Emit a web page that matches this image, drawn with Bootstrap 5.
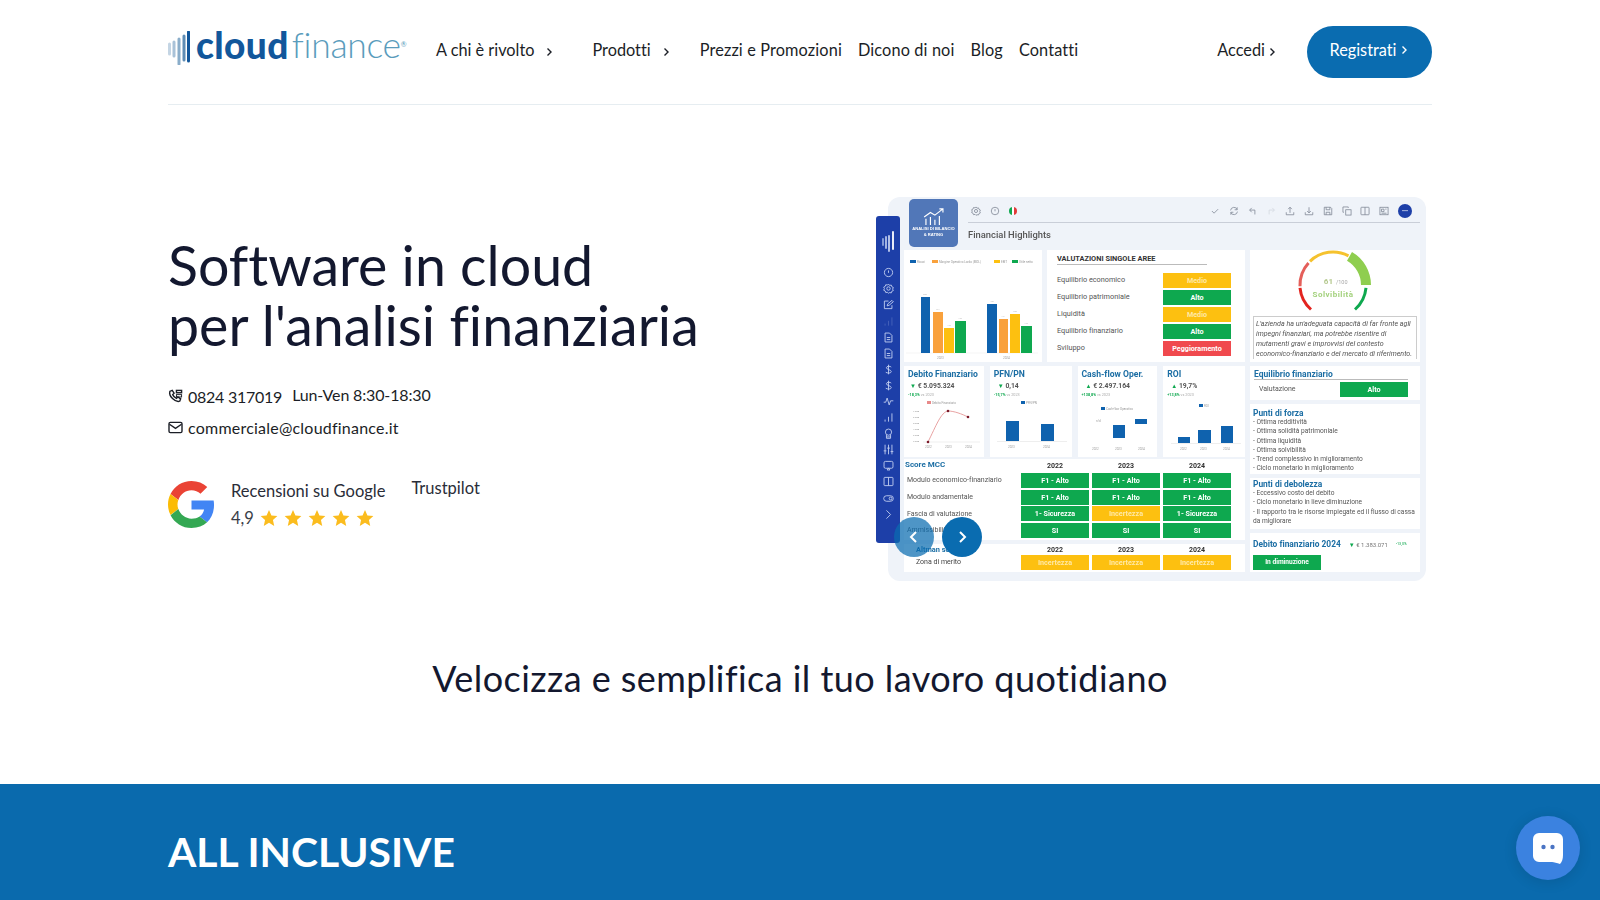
<!DOCTYPE html>
<html lang="it">
<head>
<meta charset="utf-8">
<title>Cloud Finance</title>
<link href="https://cdn.jsdelivr.net/npm/bootstrap@5.3.0/dist/css/bootstrap.min.css" rel="stylesheet">
<style>
body { font-family: Lato, "Liberation Sans", sans-serif; color: #13182f; background: #fff; overflow: hidden; font-variant-ligatures: none; }
a { text-decoration: none; }
.page-wrap { width: 1264px; margin: 0 auto; }

/* header */
.topbar { height: 105px; border-bottom: 1px solid #e6edf1; padding: 0 !important; }
.brand { font-size: 37px; line-height: 1; margin: -15px 0 0 0; padding: 0; width: 268px; color: #12579b; }
.brand svg { margin-right: 6px; margin-top: 6px; }
.brand-a { font-weight: 900; letter-spacing: .4px; color: #12579b; }
.brand-b { font-size: 35.5px; font-weight: 300; color: #5a9cbc; margin-left: 3px; letter-spacing: -.3px; }
.brand-r { font-size: 7px; vertical-align: 20px; color: #5a9cbc; }
.mainnav { margin-top: -4px; }
.navbar-expand .navbar-nav .mainlink { color: #1b1e26; font-size: 16.3px; padding: 0; white-space: nowrap; }
.chev { display: inline-block; margin-left: 4px; vertical-align: -1px; }
.nav-drop .chev { margin-left: 12px; }
.nav-drop { margin-right: 39px; }
.nav-drop-b { margin-right: 30px; }
.navbar-expand .navbar-nav .nav-plain { margin-right: 16px; letter-spacing: .13px; }
.navbar-expand .navbar-nav .nav-last { letter-spacing: .13px; }
.login { color: #1b1e26; font-size: 16.3px; margin-right: 31px; margin-top: -4px; }
.signup { background: #0a6cb0; color: #fff; border-radius: 26px; height: 52px; width: 125px; font-size: 16.3px; padding: 0 2px 4px 0; border: 0; }
.signup:hover { background: #0a6cb0; color: #fff; }

/* hero */
.hero { padding-top: 92px; height: 476px; }
.hero-title { font-size: 55.5px; line-height: 60px; font-weight: 400; color: #13182f; margin: 38px 0 0; }
.contact-line { font-size: 16px; color: #1b1e26; height: 31px; }
.contact-line svg { margin-right: 5px; }
.contact-first { margin-top: 26px; }
.phone-text { letter-spacing: -.25px; }
.hours { margin-left: 10px; margin-top: -3px; letter-spacing: -.15px; }
.mail-text { letter-spacing: .22px; }
.reviews { margin-top: 38px; }
.g-logo { margin-right: 16px; }
.rev-title { font-size: 16.5px; color: #2a2d38; line-height: 20px; }
.rev-score { font-size: 16.5px; color: #3b3e48; line-height: 20px; margin-top: 7px; }
.rev-score svg { margin-left: 6px; }
.trust { font-size: 16.5px; color: #2a2d38; margin: -5px 0 0 26px; }

.tagline { font-size: 36px; font-weight: 400; text-align: center; color: #13182f; margin: 0; height: 203px; padding-top: 76px; letter-spacing: .44px; }
.band { background: #0a6aad; height: 116px; }
.band h2 { color: #fff; font-size: 40.8px; font-weight: 700; margin: 0; padding-top: 44px; line-height: 48px; }
.chat-btn { position: fixed; right: 20px; bottom: 20px; width: 64px; height: 64px; border-radius: 50%; background: #3b82e0; box-shadow: 0 2px 14px rgba(0,0,0,.12); }

/* dashboard picture */
.dash { position: relative; width: 538px; height: 384px; margin-right: 6px; background: #eff3f9; border-radius: 12px; font-family: Roboto, "Liberation Sans", sans-serif; color: #444; filter: blur(.3px); padding: 2px 6px 0 16px; }
.side { position: absolute; left: -12px; top: 19px; width: 24px; height: 327px; background: #1d3fa8; border-radius: 3px; padding-top: 15px; }
.side-logo { margin-bottom: 7px; }
.side-ico { height: 16.1px; }
.side-ico svg { width: 11px; height: 11px; stroke: #c3d0f0; fill: none; stroke-width: 1.3; }
.arrow-btn { position: absolute; top: 320px; width: 40px; height: 40px; border-radius: 50%; background: #0a6cb0; }
.arrow-prev { left: 6px; background: rgba(10,108,176,.72); }
.arrow-next { left: 54px; }
.tile { width: 49px; height: 48px; background: #5177b8; border-radius: 5px; color: #fff; font-family: "Liberation Sans", sans-serif; font-size: 4.1px; font-weight: 700; line-height: 5.5px; text-align: center; margin-left: 5px; padding-top: 9px; }
.tile svg { display: block; margin: 0 auto 1px; }
.dash-head { height: 51px; }
.dash-tools { margin-left: 10px; flex: 1; }
.tool-row { height: 24px; border-bottom: 1px solid #c9ced8; padding-top: 7px; }
.tool-row svg { width: 10px; height: 10px; fill: none; stroke: #7a8290; stroke-width: 1.2; }
.tool-left { gap: 9px; margin-left: 3px; }
.tool-right { gap: 8.8px; margin-right: 8px; }
.tool-more { width: 14px; height: 14px; border-radius: 50%; background: #1d3fa8; color: #fff; font-size: 6px; line-height: 13px; text-align: center; margin-top: -2px; }
.dash-title { font-size: 9.4px; font-weight: 500; color: #555; margin-top: 5px; }
.flag { width: 8px; height: 8px; border-radius: 50%; background: linear-gradient(90deg, #0ea84f 33%, #fff 33% 66%, #e23a3a 66%); margin-top: 1px; }
.dash-body { gap: 5px; }
.dash-left { width: 341px; }
.dash-right { width: 170px; gap: 4px; }
.pane { background: #fff; }
.pane-head { color: #1c6ea4; font-weight: 700; font-size: 8px; line-height: 10px; }
.pane-chart { width: 138px; height: 112px; }
.pane-areas { width: 198px; height: 112px; padding: 3px 14px 0 10px; }
.areas-title { font-size: 7.4px; font-weight: 700; color: #333; width: 150px; border-bottom: 1px solid #bbb; line-height: 11px; height: 12px; margin-bottom: 8px; white-space: nowrap; }
.area-row { height: 15px; margin-bottom: 2px; font-size: 7.3px; color: #555; }
.chip { width: 68px; height: 15px; line-height: 15px; color: #fff; text-align: center; font-size: 7.2px; font-weight: 700; flex: none; }
.chip-g { background: #0ea84f; }
.chip-y { background: #fdc010; color: #ffe9a6; }
.chip-r { background: #f0494e; }
.kpi-row { gap: 6px; margin-top: 4px; height: 91px; }
.pane-kpi { padding: 3px 0 0 4px; overflow: hidden; }
.pane-kpi .pane-head { font-size: 8.6px; }
.kpi-val { font-size: 6.8px; font-weight: 700; color: #555; line-height: 9px; margin-top: 2px; padding-left: 2px; }
.kpi-delta { font-size: 3.8px; color: #0ea84f; font-weight: 700; line-height: 6px; margin-top: 1px; }
.kpi-delta span { color: #aaa; font-weight: 400; }
.up { color: #0ea84f; font-size: 6px; }
.pane-score { margin-top: 2px; height: 81px; padding: 0 14px 0 1px; display: grid; grid-template-columns: 113px 68px 68px 68px; column-gap: 3px; row-gap: 1.8px; grid-template-rows: 12px repeat(4, 15px); font-size: 7px; color: #555; align-items: center; }
.pane-score .yr { font-size: 7px; font-weight: 700; color: #333; text-align: center; margin-top: 3px; }
.row-label { padding-left: 2px; white-space: nowrap; }
.pane-altman { margin-top: 4px; height: 28px; padding: 1px 14px 0 1px; display: grid; grid-template-columns: 113px 68px 68px 68px; column-gap: 3px; grid-template-rows: 10px 15px; font-size: 7px; color: #555; align-items: center; }
.altman-name { color: #1c6ea4; font-weight: 700; padding-left: 11px; white-space: nowrap; font-size: 7.4px; }
.pane-altman .yr { font-size: 7px; font-weight: 700; color: #333; text-align: center; }
.altman-row { padding-left: 11px; color: #444; white-space: nowrap; }
.pane-gauge { height: 112px; padding: 0 3px; }
.gauge-note { border: 1px solid #ccc; border-bottom: 0; font-size: 7.1px; line-height: 10px; font-style: italic; color: #555; padding: 2px 0 0 2px; height: 43px; white-space: nowrap; overflow: hidden; }
.pane-eq { height: 34px; padding: 3px 12px 0 4px; }
.pane-eq .pane-head { font-size: 8.5px; }
.eq-line { border-bottom: 1px solid #bbb; height: 11px; }
.eq-row { font-size: 7px; color: #555; padding: 2px 0 0 5px; }
.pane-list { padding: 1px 2px 0 3px; font-size: 6.6px; line-height: 9.3px; color: #555; white-space: nowrap; }
.pane-list .pane-head { font-size: 8.4px; }
.pane-forza { height: 70px; padding-top: 4px; }
.pane-debo { height: 51px; }
.pane-debt { height: 39px; padding: 6px 3px 0 3px; }
.pane-debt .pane-head { font-size: 8.4px; }
.debt-vals { font-size: 6px; color: #777; }
.debt-pct { font-size: 3.8px; color: #0ea84f; }
.chip-wide { margin-top: 6px; font-size: 6.6px; }
</style>
</head>
<body>
<svg width="0" height="0" class="position-absolute">
  <symbol id="i-circle" viewBox="0 0 16 16"><circle cx="8" cy="8" r="6"/><path d="M8 5v3.5"/></symbol>
  <symbol id="i-gear" viewBox="0 0 16 16"><circle cx="8" cy="8" r="2.5"/><path d="M8 1.5l1.5 2 2.5-.5.8 2.4 2.2 1.1-1 2.4 1 2.1-2.2 1-.8 2.4-2.5-.5L8 15l-1.5-1.6-2.5.5-.8-2.4L1 10.500l1-2.400-1-2.100 2.200-1.100.8-2.400 2.500.5z"/></symbol>
  <symbol id="i-edit" viewBox="0 0 16 16"><path d="M13 9v5H2V3h6"/><path d="M6 10l1-3 6-5 2 2-6 5z"/></symbol>
  <symbol id="i-bars" viewBox="0 0 16 16"><path d="M3 14v-3M8 14V7M13 14V2"/></symbol>
  <symbol id="i-doc" viewBox="0 0 16 16"><path d="M3 1.500h6.500L13 5v9.500H3zM5.500 8h5M5.500 11h5"/></symbol>
  <symbol id="i-dollar" viewBox="0 0 16 16"><path d="M12 4.500C11 3 5 2.500 5 5.500S12 8 12 11s-6 2.500-8 1M8 1v14"/></symbol>
  <symbol id="i-pulse" viewBox="0 0 16 16"><path d="M1 9h3l2-6 3 10 2-6h4"/></symbol>
  <symbol id="i-award" viewBox="0 0 16 16"><circle cx="8" cy="6" r="4.500"/><path d="M5 10v5h6v-5M5 13h6"/></symbol>
  <symbol id="i-sliders" viewBox="0 0 16 16"><path d="M3 1v14M8 1v14M13 1v14M1 10h4M6 6h4M11 11h4"/></symbol>
  <symbol id="i-screen" viewBox="0 0 16 16"><rect x="1.500" y="2" width="13" height="10" rx="2"/><path d="M6 14.500h4l-2-3z"/></symbol>
  <symbol id="i-book" viewBox="0 0 16 16"><rect x="1.500" y="2" width="13" height="12" rx="1"/><path d="M8 2v12"/></symbol>
  <symbol id="i-toggle" viewBox="0 0 16 16"><rect x="1" y="4" width="14" height="8" rx="4"/><circle cx="11" cy="8" r="2"/></symbol>
  <symbol id="i-chev" viewBox="0 0 16 16"><path d="M5 2l6 6-6 6"/></symbol>
  <symbol id="i-check" viewBox="0 0 16 16"><path d="M3 8l3.500 3.500L13 5"/></symbol>
  <symbol id="i-sync" viewBox="0 0 16 16"><path d="M2.500 7A5.500 5.500 0 0 1 13 5.500M13.500 9A5.500 5.500 0 0 1 3 10.500M13 2v4h-4M3 14v-4h4"/></symbol>
  <symbol id="i-undo" viewBox="0 0 16 16"><path d="M6 3L2.500 6.500 6 10M3 6.500h8v7"/></symbol>
  <symbol id="i-redo" viewBox="0 0 16 16"><path d="M10 3l3.500 3.500L10 10M13 6.500H5v7"/></symbol>
  <symbol id="i-up" viewBox="0 0 16 16"><path d="M2 10v4h12v-4M8 11V2M5 5l3-3 3 3"/></symbol>
  <symbol id="i-down" viewBox="0 0 16 16"><path d="M2 10v4h12v-4M8 2v9M5 8l3 3 3-3"/></symbol>
  <symbol id="i-save" viewBox="0 0 16 16"><path d="M2 2h10l2 2v10H2zM5 2v4h6V2M5 14v-4h6v4"/></symbol>
  <symbol id="i-copy" viewBox="0 0 16 16"><rect x="6" y="6" width="8.500" height="8.500"/><path d="M10 3V1.500H1.500V10H3"/></symbol>
  <symbol id="i-cols" viewBox="0 0 16 16"><rect x="1.500" y="2" width="13" height="12" rx="1"/><path d="M8 2v12"/></symbol>
  <symbol id="i-pic" viewBox="0 0 16 16"><rect x="1.500" y="2" width="13" height="12"/><path d="M4 9V5h4v4zM10 5h2M4 11.500h8"/></symbol>
  <symbol id="i-star" viewBox="0 0 20 20"><polygon points="10,1 12.700,7.100 19.300,7.800 14.400,12.200 15.800,18.800 10,15.400 4.200,18.800 5.600,12.200 .7,7.800 7.300,7.100"/></symbol>
</svg>

<div class="page-wrap">
  <nav class="navbar navbar-expand topbar">
    <a class="navbar-brand brand d-flex align-items-center" href="#">
      <svg width="22" height="34" viewBox="0 0 22 34"><g stroke-width="3" stroke-linecap="round" fill="none"><path d="M1.500 13v10" stroke="#c4d5e4"/><path d="M6 11v14" stroke="#a9c2d8"/><path d="M11 8v25" stroke="#8aadca"/><path d="M16 5v24" stroke="#5f8db5"/><path d="M20.500 1v29" stroke="#12579b"/></g></svg>
      <span class="brand-a">cloud</span><span class="brand-b">finance</span><span class="brand-r">®</span>
    </a>
    <div class="navbar-nav mainnav align-items-center">
      <a class="nav-link mainlink nav-drop" href="#">A chi è rivolto<svg class="chev" width="7" height="10" viewBox="0 0 7 10" fill="none" stroke="#1b1e26" stroke-width="1.400"><path d="M1.500 1.500L5 5 1.500 8.500"/></svg></a>
      <a class="nav-link mainlink nav-drop nav-drop-b" href="#">Prodotti<svg class="chev" width="7" height="10" viewBox="0 0 7 10" fill="none" stroke="#1b1e26" stroke-width="1.400"><path d="M1.500 1.500L5 5 1.500 8.500"/></svg></a>
      <a class="nav-link mainlink nav-plain" href="#">Prezzi e Promozioni</a>
      <a class="nav-link mainlink nav-plain" href="#">Dicono di noi</a>
      <a class="nav-link mainlink nav-plain" href="#">Blog</a>
      <a class="nav-link mainlink nav-last" href="#">Contatti</a>
    </div>
    <div class="ms-auto d-flex align-items-center">
      <a class="login" href="#">Accedi<svg class="chev" width="7" height="10" viewBox="0 0 7 10" fill="none" stroke="#1b1e26" stroke-width="1.400"><path d="M1.500 1.500L5 5 1.500 8.500"/></svg></a>
      <a class="btn signup d-flex align-items-center justify-content-center" href="#">Registrati<svg class="chev" width="7" height="10" viewBox="0 0 7 10" fill="none" stroke="#fff" stroke-width="1.400"><path d="M1.500 1.500L5 5 1.500 8.500"/></svg></a>
    </div>
  </nav>

  <section class="hero d-flex justify-content-between align-items-start">
    <div>
      <h1 class="hero-title">Software in cloud<br>per l'analisi finanziaria</h1>
      <div class="contact-line contact-first d-flex align-items-center">
        <svg width="15" height="15" viewBox="0 0 16 16" fill="none" stroke="#1b1e26" stroke-width="1.500"><path d="M2 2.500l2.500-1 2 3-1.500 1.500c.7 1.700 2.300 3.300 4 4L10.500 8.500l3 2-1 2.500c-5 1.500-12-5.500-10.500-10.500z"/><rect x="9" y="1.500" width="5.500" height="2.500"/><rect x="9" y="6" width="5.500" height="2.500" stroke-width="1"/></svg>
        <span class="phone-text">0824 317019</span><span class="hours">Lun-Ven 8:30-18:30</span>
      </div>
      <div class="contact-line d-flex align-items-center">
        <svg width="15" height="13" viewBox="0 0 16 14" fill="none" stroke="#1b1e26" stroke-width="1.500"><rect x="1" y="1.500" width="14" height="11" rx="1.500"/><path d="M1.500 3.500L8 8l6.500-4.500"/></svg>
        <span class="mail-text">commerciale@cloudfinance.it</span>
      </div>
      <div class="reviews d-flex align-items-start">
        <svg class="g-logo" width="47" height="47" viewBox="0 0 48 48"><path fill="#ea4335" d="M24 9.500c3.500 0 6.700 1.300 9.200 3.400l6.900-6.900C35.900 2.200 30.300 0 24 0 14.600 0 6.500 5.400 2.600 13.200l8 6.200C12.500 13.600 17.800 9.500 24 9.500z"/><path fill="#4285f4" d="M47 24.500c0-1.600-.1-3.100-.4-4.500H24v9h12.900c-.6 3-2.200 5.500-4.700 7.200l7.700 6C44.400 38 47 31.800 47 24.500z"/><path fill="#fbbc05" d="M10.500 28.600c-.5-1.400-.8-3-.8-4.600s.3-3.200.8-4.600l-8-6.200C.9 16.500 0 20.100 0 24s.9 7.500 2.600 10.800z"/><path fill="#34a853" d="M24 48c6.500 0 11.900-2.100 15.900-5.800l-7.700-6c-2.200 1.400-4.900 2.300-8.200 2.300-6.200 0-11.500-4.200-13.400-9.800l-8 6.200C6.500 42.600 14.600 48 24 48z"/></svg>
        <div>
          <div class="rev-title">Recensioni su Google</div>
          <div class="rev-score d-flex align-items-center">4,9<svg width="18" height="18" fill="#fbbc1e"><use href="#i-star"/></svg><svg width="18" height="18" fill="#fbbc1e"><use href="#i-star"/></svg><svg width="18" height="18" fill="#fbbc1e"><use href="#i-star"/></svg><svg width="18" height="18" fill="#fbbc1e"><use href="#i-star"/></svg><svg width="18" height="18" fill="#fbbc1e"><use href="#i-star"/></svg></div>
        </div>
        <div class="trust">Trustpilot</div>
      </div>
    </div>

    <div class="dash">
      <div class="d-flex dash-head">
        <div class="tile">
          <svg width="22" height="17" viewBox="0 0 24 19" fill="none" stroke="#fff" stroke-width="1.300"><path d="M3 19v-7M8 19v-9M13 19v-6M18 19V9M1 10l7-5 5 3 9-7M18 1h4v4"/></svg>
          <div>ANALISI DI BILANCIO<br>&amp; RATING</div>
        </div>
        <div class="dash-tools">
          <div class="tool-row d-flex justify-content-between">
            <div class="d-flex tool-left">
              <svg><use href="#i-gear"/></svg><svg><use href="#i-circle"/></svg><div class="flag"></div>
            </div>
            <div class="d-flex tool-right">
              <svg><use href="#i-check"/></svg><svg><use href="#i-sync"/></svg><svg><use href="#i-undo"/></svg><svg class="opacity-25"><use href="#i-redo"/></svg><svg><use href="#i-up"/></svg><svg><use href="#i-down"/></svg><svg><use href="#i-save"/></svg><svg><use href="#i-copy"/></svg><svg><use href="#i-cols"/></svg><svg><use href="#i-pic"/></svg>
              <div class="tool-more">•••</div>
            </div>
          </div>
          <div class="dash-title">Financial Highlights</div>
        </div>
      </div>

      <div class="d-flex dash-body">
        <div class="dash-left">
          <div class="d-flex dash-body">
            <div class="pane pane-chart">
              <svg width="138" height="112" viewBox="0 0 138 112" font-family="Roboto, sans-serif">
                <g font-size="3" fill="#999">
                  <rect x="6" y="10" width="6" height="3" fill="#0f62ae"/><text x="13" y="13">Ricavi</text>
                  <rect x="28" y="10" width="6" height="3" fill="#f9a13c"/><text x="35" y="13">Margine Operativo Lordo (MOL)</text>
                  <rect x="90" y="10" width="6" height="3" fill="#fdc010"/><text x="97" y="13">EBIT</text>
                  <rect x="108" y="10" width="6" height="3" fill="#0ea84f"/><text x="115" y="13">Utile netto</text>
                  <text x="33" y="109">2023</text><text x="99" y="109">2024</text>
                </g>
                <path d="M2 103h132" stroke="#eee" stroke-width=".6"/>
                <rect x="17" y="47" width="9" height="56" fill="#0f62ae"/><rect x="29" y="62" width="10" height="41" fill="#f9a13c"/><rect x="40" y="78" width="10" height="25" fill="#fdc010"/><rect x="51" y="71" width="11" height="32" fill="#0ea84f"/>
                <rect x="83" y="54" width="10" height="49" fill="#0f62ae"/><rect x="95" y="69" width="9" height="34" fill="#f9a13c"/><rect x="106" y="64" width="10" height="39" fill="#fdc010"/><rect x="117" y="76" width="11" height="27" fill="#0ea84f"/>
                <g font-size="2.500" fill="#aaa" text-anchor="middle">
                  <text x="21" y="45">5.0</text><text x="34" y="60">2.1</text><text x="45" y="76">1.2</text><text x="56" y="69">1.5</text>
                  <text x="88" y="52">4.6</text><text x="99" y="67">1.7</text><text x="111" y="62">2.0</text><text x="122" y="74">1.3</text>
                </g>
              </svg>
            </div>
            <div class="pane pane-areas">
              <div class="areas-title">VALUTAZIONI SINGOLE AREE</div>
              <div class="area-row d-flex justify-content-between align-items-center"><span>Equilibrio economico</span><div class="chip chip-y">Medio</div></div>
              <div class="area-row d-flex justify-content-between align-items-center"><span>Equilibrio patrimoniale</span><div class="chip chip-g">Alto</div></div>
              <div class="area-row d-flex justify-content-between align-items-center"><span>Liquidità</span><div class="chip chip-y">Medio</div></div>
              <div class="area-row d-flex justify-content-between align-items-center"><span>Equilibrio finanziario</span><div class="chip chip-g">Alto</div></div>
              <div class="area-row d-flex justify-content-between align-items-center"><span>Sviluppo</span><div class="chip chip-r">Peggioramento</div></div>
            </div>
          </div>

          <div class="d-flex kpi-row">
            <div class="pane pane-kpi flex-fill">
              <div class="pane-head text-nowrap">Debito Finanziario</div>
              <div class="kpi-val"><span class="up">▼</span> € 5.095.324</div>
              <div class="kpi-delta">-18,3% <span>vs 2023</span></div>
              <svg width="76" height="56" viewBox="0 0 76 56" font-size="3" fill="#999" font-family="Roboto, sans-serif">
                <rect x="19" y="3" width="4" height="3" fill="#e88a8a"/><text x="24" y="6">Debito Finanziario</text>
                <path d="M15 44h57" stroke="#ddd" stroke-width=".5"/>
                <path d="M20 44C28 28 33 14 40 13c6 0 14 3 20 6" fill="none" stroke="#e28a8a" stroke-width=".8"/>
                <circle cx="20" cy="44" r="1.300" fill="#7b1b2b"/><circle cx="40" cy="13" r="1.300" fill="#7b1b2b"/><circle cx="60" cy="19" r="1.300" fill="#7b1b2b"/>
                <g font-size="2.500"><text x="5" y="14">7.000</text><text x="5" y="20">6.000</text><text x="5" y="26">5.000</text><text x="5" y="32">4.000</text><text x="5" y="38">3.000</text><text x="5" y="44">2.000</text></g>
                <text x="17" y="50">2022</text><text x="37" y="50">2023</text><text x="57" y="50">2024</text>
              </svg>
            </div>
            <div class="pane pane-kpi flex-fill">
              <div class="pane-head">PFN/PN</div>
              <div class="kpi-val ps-1"><span class="up">▼</span> 0,14</div>
              <div class="kpi-delta">-15,7% <span>vs 2023</span></div>
              <svg width="78" height="56" viewBox="0 0 78 56" font-size="3" fill="#999" font-family="Roboto, sans-serif">
                <rect x="27" y="3" width="4" height="3" fill="#0f62ae"/><text x="32" y="6">PFN/PN</text>
                <rect x="12" y="23" width="13" height="20" fill="#0f62ae"/><rect x="47" y="26" width="13" height="17" fill="#0f62ae"/>
                <path d="M3 43.500h70" stroke="#ddd" stroke-width=".5"/>
                <text x="14" y="50">2023</text><text x="49" y="50">2024</text>
              </svg>
            </div>
            <div class="pane pane-kpi flex-fill">
              <div class="pane-head text-nowrap">Cash-flow Oper.</div>
              <div class="kpi-val ps-1"><span class="up">▲</span> € 2.497.164</div>
              <div class="kpi-delta">+138,8% <span>vs 2023</span></div>
              <svg width="76" height="56" viewBox="0 0 76 56" font-size="3" fill="#999" font-family="Roboto, sans-serif">
                <rect x="19" y="9" width="4" height="3" fill="#0f62ae"/><text x="24" y="12">Cash-flow Operativo</text>
                <rect x="31" y="27" width="12" height="13" fill="#0f62ae"/><rect x="53" y="21" width="12" height="5" fill="#0f62ae"/>
                <text x="14" y="24">n/d</text><text x="10" y="52">2022</text><text x="33" y="52">2023</text><text x="56" y="52">2024</text>
              </svg>
            </div>
            <div class="pane pane-kpi flex-fill">
              <div class="pane-head">ROI</div>
              <div class="kpi-val ps-1"><span class="up">▲</span> 19,7%</div>
              <div class="kpi-delta">+13,8% <span>vs 2023</span></div>
              <svg width="78" height="56" viewBox="0 0 78 56" font-size="3" fill="#999" font-family="Roboto, sans-serif">
                <rect x="32" y="6" width="4" height="3" fill="#0f62ae"/><text x="37" y="9">ROI</text>
                <rect x="11" y="39" width="12" height="6" fill="#0f62ae"/><rect x="31" y="32" width="13" height="13" fill="#0f62ae"/><rect x="54" y="28" width="12" height="17" fill="#0f62ae"/>
                <path d="M4 45.500h70" stroke="#ddd" stroke-width=".5"/>
                <text x="13" y="52">2022</text><text x="33" y="52">2023</text><text x="56" y="52">2024</text>
              </svg>
            </div>
          </div>

          <div class="pane pane-score">
            <div class="pane-head">Score MCC</div><div class="yr">2022</div><div class="yr">2023</div><div class="yr">2024</div>
            <div class="row-label">Modulo economico-finanziario</div><div class="chip chip-g">F1 - Alto</div><div class="chip chip-g">F1 - Alto</div><div class="chip chip-g">F1 - Alto</div>
            <div class="row-label">Modulo andamentale</div><div class="chip chip-g">F1 - Alto</div><div class="chip chip-g">F1 - Alto</div><div class="chip chip-g">F1 - Alto</div>
            <div class="row-label">Fascia di valutazione</div><div class="chip chip-g">1- Sicurezza</div><div class="chip chip-y">Incertezza</div><div class="chip chip-g">1- Sicurezza</div>
            <div class="row-label">Ammissibilità</div><div class="chip chip-g">SI</div><div class="chip chip-g">SI</div><div class="chip chip-g">SI</div>
          </div>
          <div class="pane pane-altman">
            <div class="altman-name">Altman score</div><div class="yr">2022</div><div class="yr">2023</div><div class="yr">2024</div>
            <div class="altman-row">Zona di merito</div><div class="chip chip-y">Incertezza</div><div class="chip chip-y">Incertezza</div><div class="chip chip-y">Incertezza</div>
          </div>
        </div>

        <div class="dash-right d-flex flex-column">
          <div class="pane pane-gauge">
            <svg class="d-block" width="164" height="66" viewBox="0 0 164 66" fill="none" stroke-linecap="butt" font-family="Roboto, sans-serif">
              <path d="M58 59.500A33 33 0 0 1 47 37.900" stroke="#e3241f" stroke-width="3"/>
              <path d="M47 36.200A33 33 0 0 1 55.500 12.900" stroke="#e45f5a" stroke-width="3"/>
              <path d="M57 11.300A33 33 0 0 1 95.500 5.900" stroke="#f5c22e" stroke-width="3"/>
              <path d="M96.500 6.400A33 33 0 0 1 113 35" stroke="#8fce4f" stroke-width="10"/>
              <path d="M113 37.900A33 33 0 0 1 102 59.500" stroke="#0ea84f" stroke-width="3"/>
              <text x="80" y="34" text-anchor="end" font-size="8" font-weight="700" fill="#b5c98f">61</text>
              <text x="83" y="34" font-size="5.500" fill="#aaa">/100</text>
              <text x="80" y="47" text-anchor="middle" font-size="8" letter-spacing=".5" font-weight="700" fill="#a3d17c">Solvibilità</text>
            </svg>
            <div class="gauge-note">L'azienda ha un'adeguata capacità di far fronte agli<br>impegni finanziari, ma potrebbe risentire di<br>mutamenti gravi e improvvisi del contesto<br>economico-finanziario e del mercato di riferimento.</div>
          </div>
          <div class="pane pane-eq">
            <div class="pane-head eq-line">Equilibrio finanziario</div>
            <div class="d-flex justify-content-between align-items-center eq-row"><span>Valutazione</span><div class="chip chip-g">Alto</div></div>
          </div>
          <div class="pane pane-list pane-forza">
            <div class="pane-head">Punti di forza</div>
            - Ottima redditività<br>- Ottima solidità patrimoniale<br>- Ottima liquidità<br>- Ottima solvibilità<br>- Trend complessivo in miglioramento<br>- Ciclo monetario in miglioramento
          </div>
          <div class="pane pane-list pane-debo">
            <div class="pane-head">Punti di debolezza</div>
            - Eccessivo costo del debito<br>- Ciclo monetario in lieve diminuzione<br>- Il rapporto tra le risorse impiegate ed il flusso di cassa<br>da migliorare
          </div>
          <div class="pane pane-debt">
            <div class="d-flex align-items-center gap-2 text-nowrap"><span class="pane-head">Debito finanziario 2024</span><span class="debt-vals"><span class="up">▼</span> € 1.383.071</span><span class="debt-pct">-13,0%</span></div>
            <div class="chip chip-g chip-wide">In diminuzione</div>
          </div>
        </div>
      </div>

      <div class="side d-flex flex-column align-items-center">
        <svg class="side-logo" width="14" height="22" viewBox="0 0 14 22" fill="none" stroke-width="1.800" stroke-linecap="round"><path d="M2 8v6" stroke="#8fa5dc"/><path d="M5 6v11" stroke="#b3c2e8"/><path d="M8 5v15" stroke="#c3d0f0"/><path d="M12 1v17" stroke="#fff"/></svg>
        <div class="side-ico"><svg><use href="#i-circle"/></svg></div>
        <div class="side-ico"><svg><use href="#i-gear"/></svg></div>
        <div class="side-ico"><svg><use href="#i-edit"/></svg></div>
        <div class="side-ico opacity-25"><svg><use href="#i-bars"/></svg></div>
        <div class="side-ico"><svg><use href="#i-doc"/></svg></div>
        <div class="side-ico"><svg><use href="#i-doc"/></svg></div>
        <div class="side-ico"><svg><use href="#i-dollar"/></svg></div>
        <div class="side-ico"><svg><use href="#i-dollar"/></svg></div>
        <div class="side-ico"><svg><use href="#i-pulse"/></svg></div>
        <div class="side-ico"><svg><use href="#i-bars"/></svg></div>
        <div class="side-ico"><svg><use href="#i-award"/></svg></div>
        <div class="side-ico"><svg><use href="#i-sliders"/></svg></div>
        <div class="side-ico"><svg><use href="#i-screen"/></svg></div>
        <div class="side-ico"><svg><use href="#i-book"/></svg></div>
        <div class="side-ico"><svg><use href="#i-toggle"/></svg></div>
        <div class="side-ico"><svg><use href="#i-chev"/></svg></div>
      </div>
      <div class="arrow-btn arrow-prev d-flex align-items-center justify-content-center"><svg width="14" height="14" viewBox="0 0 14 14" fill="none" stroke="#fff" stroke-width="2"><path d="M9 2L4 7l5 5"/></svg></div>
      <div class="arrow-btn arrow-next d-flex align-items-center justify-content-center"><svg width="14" height="14" viewBox="0 0 14 14" fill="none" stroke="#fff" stroke-width="2"><path d="M5 2l5 5-5 5"/></svg></div>
    </div>
  </section>

  <h2 class="tagline">Velocizza e semplifica il tuo lavoro quotidiano</h2>
</div>

<section class="band">
  <div class="page-wrap"><h2>ALL INCLUSIVE</h2></div>
</section>

<div class="chat-btn d-flex align-items-center justify-content-center">
  <svg width="32" height="32" viewBox="0 0 32 32"><path fill="#fff" d="M7 1h18a6 6 0 0 1 6 6v16c0 4-1 7-3 9-3-1-6-2-8-2H7a6 6 0 0 1-6-6V7a6 6 0 0 1 6-6z"/><circle cx="11.500" cy="15" r="2.200" fill="#4a74c4"/><circle cx="20.500" cy="15" r="2.200" fill="#4a74c4"/></svg>
</div>
<script src="https://cdn.jsdelivr.net/npm/bootstrap@5.3.0/dist/js/bootstrap.bundle.min.js"></script>
</body>
</html>
